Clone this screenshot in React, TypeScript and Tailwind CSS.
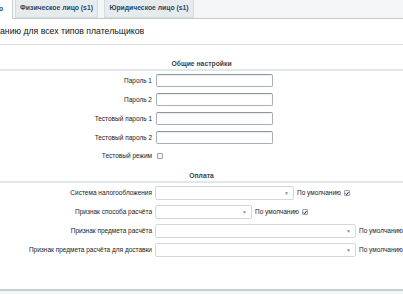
import React from "react";

const Check = ({ checked }: { checked?: boolean }) => (
  <span className="inline-flex w-[6px] h-[6px] border border-[#9aa3a8] bg-[#f4f4f4] items-center justify-center rounded-[1px]">
    {checked && (
      <svg width="5" height="5" viewBox="0 0 5 5">
        <path d="M0.6 2.6 L2 4 L4.4 0.8" stroke="#222" strokeWidth="1.2" fill="none" />
      </svg>
    )}
  </span>
);

const Input = () => (
  <div className="w-[117px] h-[13px] bg-white border border-[#a8b0b5] border-t-[#8e979c] rounded-[2px] shadow-[inset_0_1px_1px_rgba(0,0,0,0.08)]" />
);

const Select = ({ w }: { w: string }) => (
  <div className={`${w} h-[14px] bg-white border border-[#d3d8da] rounded-[2px] flex items-center justify-end pr-[4px]`}>
    <span className="text-[5px] text-[#8a9296] leading-none">▼</span>
  </div>
);

const Label = ({ children }: { children: React.ReactNode }) => (
  <div className="w-[152px] text-right text-[6.5px] text-[#1a1a1a] shrink-0 whitespace-nowrap">{children}</div>
);

const SectionHead = ({ children }: { children: React.ReactNode }) => (
  <div className="flex flex-col">
    <div className="text-center text-[6.8px] font-bold text-[#3d4548] leading-[9px]">{children}</div>
    <div className="h-[2px] bg-[#dfe7ea] mt-[1px]" />
  </div>
);

export default function App() {
  return (
    <div className="w-[403px] h-[294px] overflow-hidden bg-white relative font-['Liberation_Sans',Arial,sans-serif]">
      {/* tabs */}
      <div className="h-[19px] bg-[#f2f6f7] border-b border-[#c2cacd] flex items-stretch">
        <div className="w-[13px] bg-white border-r border-[#c9d1d4] flex items-center text-[6.8px] font-bold text-[#2e4663] -mb-[1px]">
          <span className="-ml-[1px]">о</span>
        </div>
        <div className="ml-[2px] w-[83px] bg-[#e6ecee] border border-t-0 border-[#d3dbde] flex items-center justify-center text-[6.8px] font-bold text-[#2e4663]">
          Физическое лицо (s1)
        </div>
        <div className="ml-[6px] w-[90px] bg-[#e6ecee] border border-t-0 border-[#d3dbde] flex items-center justify-center text-[6.8px] font-bold text-[#2e4663]">
          Юридическое лицо (s1)
        </div>
      </div>
      {/* title */}
      <div className="h-[26px] flex items-center text-[8.7px] text-[#111] border-b border-[#dcdfe1] whitespace-nowrap">
        анию для всех типов плательщиков
      </div>

      <div className="mt-[14px]">
        <SectionHead>Общие настройки</SectionHead>
      </div>

      <div className="flex flex-col gap-[6px] mt-[3px]">
        {["Пароль 1", "Пароль 2", "Тестовый пароль 1", "Тестовый пароль 2"].map((l) => (
          <div key={l} className="flex items-center gap-[4px]">
            <Label>{l}</Label>
            <Input />
          </div>
        ))}
        <div className="flex items-center gap-[5px] h-[10px] mt-[1px]">
          <Label>Тестовый режим</Label>
          <Check />
        </div>
      </div>

      <div className="mt-[10px]">
        <SectionHead>Оплата</SectionHead>
      </div>

      <div className="flex flex-col gap-[5px] mt-[3px]">
        <div className="flex items-center gap-[3px]">
          <Label>Система налогообложения</Label>
          <Select w="w-[139px]" />
          <span className="text-[6.5px] text-[#1a1a1a] whitespace-nowrap">По умолчанию</span>
          <Check checked />
        </div>
        <div className="flex items-center gap-[3px]">
          <Label>Признак способа расчёта</Label>
          <Select w="w-[97px]" />
          <span className="text-[6.5px] text-[#1a1a1a] whitespace-nowrap">По умолчанию</span>
          <Check checked />
        </div>
        <div className="flex items-center gap-[3px]">
          <Label>Признак предмета расчёта</Label>
          <Select w="w-[202px]" />
          <span className="text-[6.5px] text-[#1a1a1a] whitespace-nowrap">По умолчанию</span>
        </div>
        <div className="flex items-center gap-[3px]">
          <Label>Признак предмета расчёта для доставки</Label>
          <Select w="w-[202px]" />
          <span className="text-[6.5px] text-[#1a1a1a] whitespace-nowrap">По умолчанию</span>
        </div>
      </div>

      <div className="absolute left-0 right-0 top-[289px] h-[5px] border-t-2 border-[#c7d0d3] bg-[#f2f6f7]" />
    </div>
  );
}
